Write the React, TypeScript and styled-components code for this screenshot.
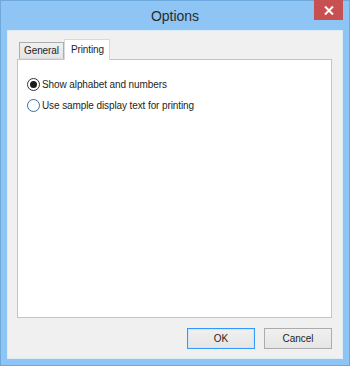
import React, { useState } from 'react'
import styled, { createGlobalStyle } from 'styled-components'

const GlobalStyle = createGlobalStyle`
  html, body {
    margin: 0;
    padding: 0;
    background: #8ec5f4;
  }
  body {
    font-family: "Liberation Sans", Arial, sans-serif;
  }
`

const Window = styled.div`
  width: 350px;
  height: 366px;
  box-sizing: border-box;
  background: #8ec5f4;
  border: 1px solid #6ea9dd;
  display: flex;
  flex-direction: column;
  position: relative;
`

const TitleBar = styled.div`
  height: 28px;
  display: flex;
  align-items: center;
  justify-content: center;
  font-size: 14px;
  color: #2b2b2b;
  padding-top: 1px;
`

const CloseButton = styled.button`
  position: absolute;
  top: -1px;
  right: 6px;
  width: 29px;
  height: 20px;
  border: none;
  padding: 0;
  background: #c75050;
  display: flex;
  align-items: center;
  justify-content: center;
`

const Client = styled.div`
  flex: 1;
  margin: 0 6px 6px 6px;
  background: #f0f0f0;
  border: 1px solid #dcebf8;
  display: flex;
  flex-direction: column;
  padding: 8px 10px 9px 9px;
`

const TabStrip = styled.div`
  display: flex;
  align-items: flex-end;
  padding-left: 2px;
  height: 20px;
  position: relative;
  z-index: 1;
`

const Tab = styled.div<{ $active?: boolean }>`
  box-sizing: border-box;
  height: ${p => (p.$active ? '21px' : '17px')};
  margin-bottom: ${p => (p.$active ? '-1px' : '0')};
  padding: ${p => (p.$active ? '3px 5px 0 6px' : '1px 4px 0 4px')};
  border: 1px solid ${p => (p.$active ? '#d9d9d9' : '#acacac')};
  border-bottom: ${p => (p.$active ? 'none' : '1px solid #d9d9d9')};
  background: ${p => (p.$active ? '#ffffff' : 'linear-gradient(#f0f0f0, #e5e5e5)')};
  font-size: 10px;
  letter-spacing: -0.1px;
  color: #1e1e1e;
  line-height: 14px;
`

const Panel = styled.div`
  flex: 1;
  background: #ffffff;
  border: 1px solid #c4c4c4;
  padding: 18px 9px;
  display: flex;
  flex-direction: column;
  gap: 8px;
`

const RadioRow = styled.label`
  display: flex;
  align-items: center;
  gap: 2px;
  font-size: 10px;
  letter-spacing: -0.1px;
  color: #1e1e1e;
  height: 13px;
`

const RadioCircle = styled.span<{ $checked?: boolean }>`
  box-sizing: border-box;
  width: 13px;
  height: 13px;
  border-radius: 50%;
  border: 1px solid ${p => (p.$checked ? '#333333' : '#3c6c9c')};
  background: #ffffff;
  display: flex;
  align-items: center;
  justify-content: center;
  &::after {
    content: '';
    width: 7px;
    height: 7px;
    border-radius: 50%;
    background: ${p => (p.$checked ? '#1a1a1a' : 'transparent')};
  }
`

const ButtonRow = styled.div`
  display: flex;
  justify-content: flex-end;
  gap: 9px;
  margin-top: 10px;
`

const DialogButton = styled.button<{ $default?: boolean }>`
  width: 68px;
  height: 21px;
  box-sizing: border-box;
  font-family: "Liberation Sans", Arial, sans-serif;
  font-size: 10px;
  color: #1e1e1e;
  background: linear-gradient(#f0f0f0, #e5e5e5);
  border: 1px solid ${p => (p.$default ? '#3399ff' : '#acacac')};
  box-shadow: ${p => (p.$default ? 'inset 0 0 0 1px #cde6fb' : 'none')};
  padding: 0;
`

export default function App() {
  const [choice, setChoice] = useState(0)
  const options = ['Show alphabet and numbers', 'Use sample display text for printing']

  return (
    <>
      <GlobalStyle />
      <Window>
        <TitleBar>Options</TitleBar>
        <CloseButton aria-label="Close">
          <svg width="10" height="9" viewBox="0 0 10 9">
            <path d="M1 0.5 L9 8.5 M9 0.5 L1 8.5" stroke="#ffffff" strokeWidth="2" />
          </svg>
        </CloseButton>
        <Client>
          <TabStrip>
            <Tab>General</Tab>
            <Tab $active>Printing</Tab>
          </TabStrip>
          <Panel>
            {options.map((text, i) => (
              <RadioRow key={text} onClick={() => setChoice(i)}>
                <RadioCircle $checked={choice === i} />
                {text}
              </RadioRow>
            ))}
          </Panel>
          <ButtonRow>
            <DialogButton $default>OK</DialogButton>
            <DialogButton>Cancel</DialogButton>
          </ButtonRow>
        </Client>
      </Window>
    </>
  )
}
